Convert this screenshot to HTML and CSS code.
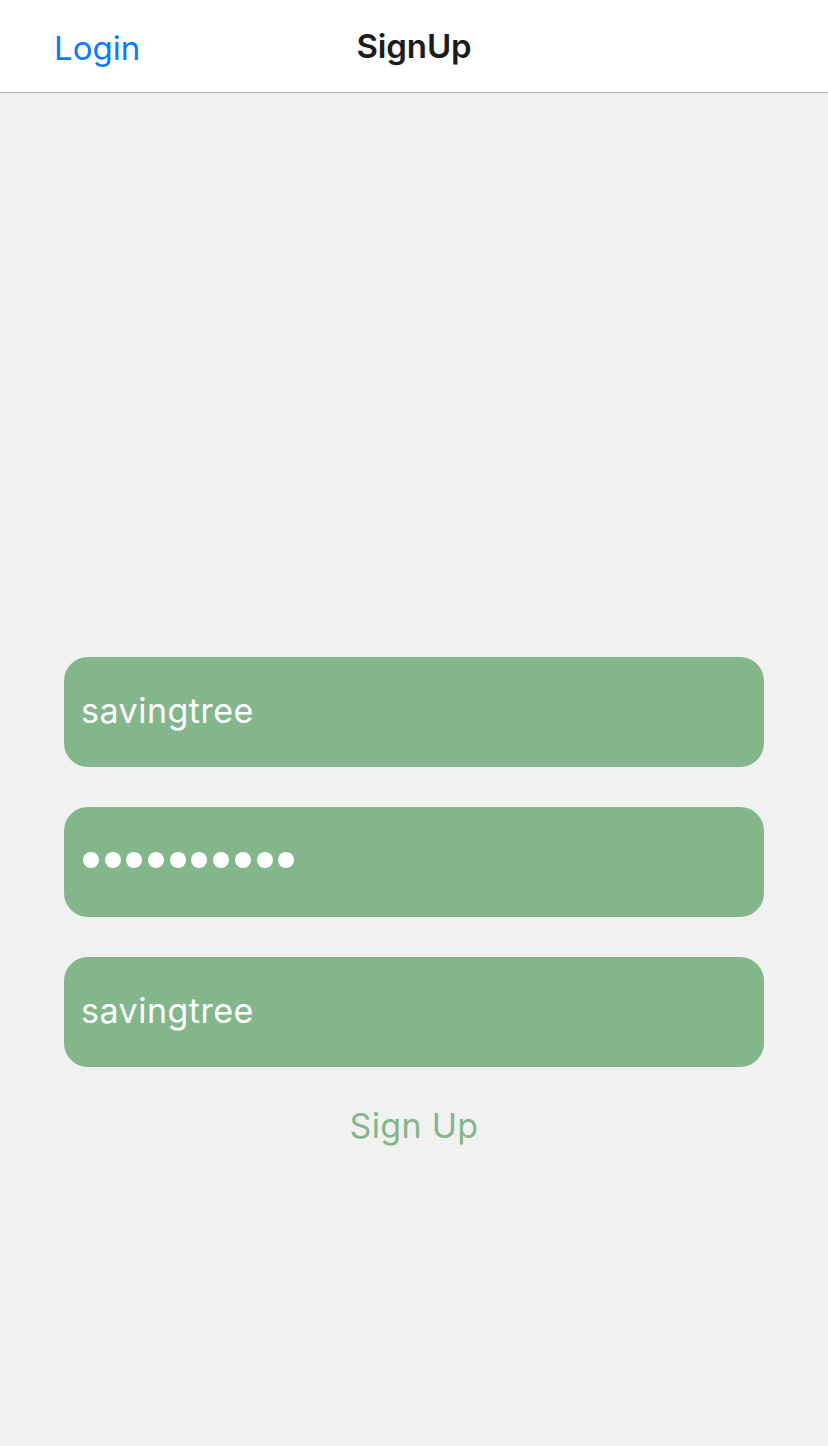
FILE: index.html
```html
<!DOCTYPE html>
<html>
<head>
<meta charset="utf-8">
<link rel="stylesheet" href="styles.css">
</head>
<body>
<header class="navbar">
  <a class="nav-back">Login</a>
  <h1 class="nav-title">SignUp</h1>
</header>
<main class="content">
  <form class="form">
    <div class="field"><span class="field-text">savingtree</span></div>
    <div class="field">
      <span class="dots"><i></i><i></i><i></i><i></i><i></i><i></i><i></i><i></i><i></i><i></i></span>
    </div>
    <div class="field"><span class="field-text">savingtree</span></div>
    <div class="submit">Sign Up</div>
  </form>
</main>
</body>
</html>
```
FILE: styles.css
```css
html, body {
  margin: 0;
  padding: 0;
}
body {
  width: 828px;
  height: 1446px;
  background: #f1f1f1;
  font-family: Inter, "Noto Sans", sans-serif;
  overflow: hidden;
}
.navbar {
  height: 92px;
  background: #ffffff;
  border-bottom: 1px solid #b2b2b2;
  display: flex;
  align-items: center;
  justify-content: center;
  position: relative;
}
.nav-back {
  position: absolute;
  left: 54px;
  top: 0;
  line-height: 96px;
  font-size: 33px;
  color: #0a7aff;
  letter-spacing: 0;
}
.nav-title {
  margin: 0;
  font-size: 33px;
  font-weight: 600;
  color: #1c1c1c;
  line-height: 98px;
  letter-spacing: -0.1px;
}
.content {
  padding-top: 564px;
  display: flex;
  justify-content: center;
}
.form {
  width: 700px;
  display: flex;
  flex-direction: column;
  gap: 40px;
}
.field {
  height: 110px;
  border-radius: 24px;
  background: #83b68b;
  display: flex;
  align-items: center;
  padding-left: 17px;
}
.field-text {
  color: #ffffff;
  font-size: 34px;
  letter-spacing: 0.5px;
  margin-top: -4px;
}
.dots {
  display: flex;
  gap: 5.7px;
  padding-left: 2px;
  margin-top: -4px;
}
.dots i {
  display: block;
  width: 16px;
  height: 16px;
  border-radius: 50%;
  background: #ffffff;
}
.submit {
  margin-top: -20px;
  text-align: center;
  color: #83b68b;
  font-size: 34px;
  line-height: 78px;
  letter-spacing: 0.3px;
}
```
